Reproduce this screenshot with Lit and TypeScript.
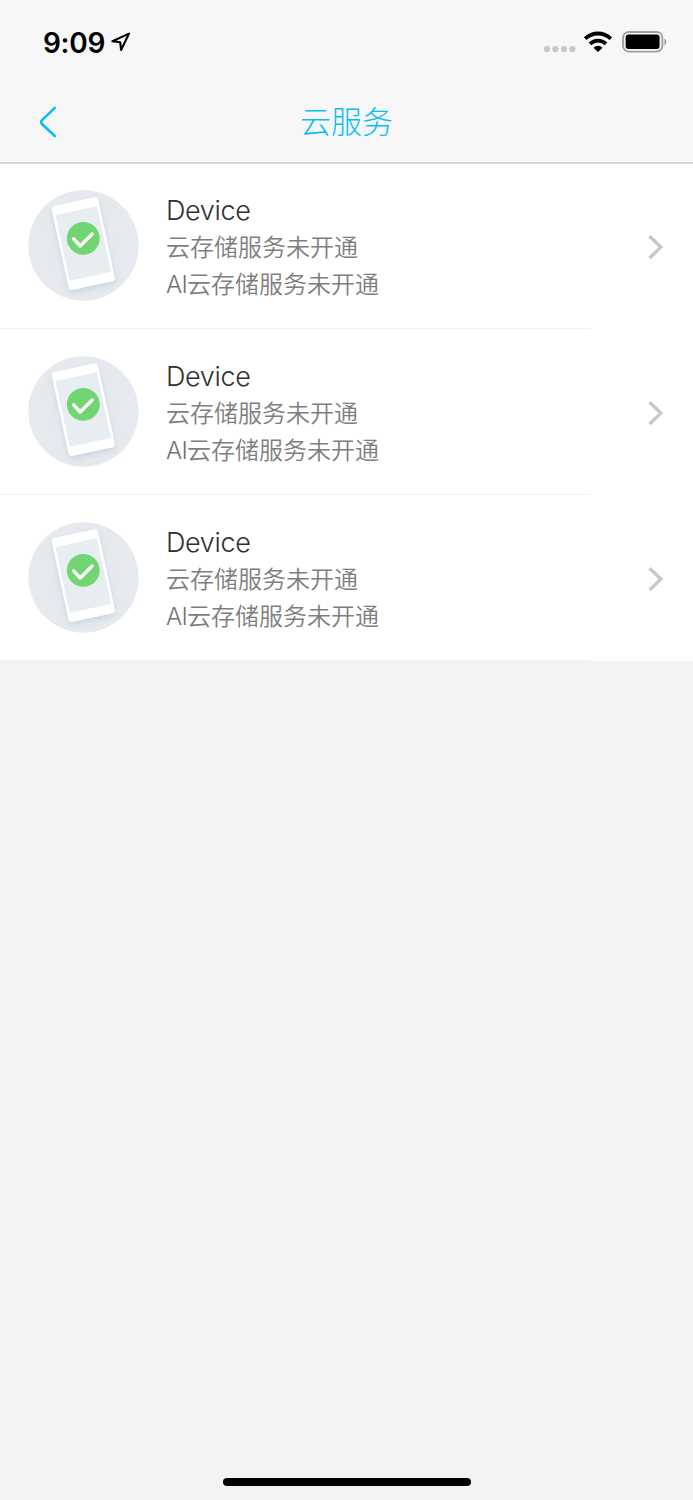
import { LitElement, html, css } from "lit";
import { customElement, property } from "lit/decorators.js";

@customElement("status-bar")
class StatusBar extends LitElement {
  static styles = css`
    :host {
      display: flex;
      justify-content: space-between;
      align-items: center;
      height: 84px;
      padding: 0 26.5px 0 43px;
      box-sizing: border-box;
    }
    .left {
      display: flex;
      align-items: center;
      gap: 6px;
    }
    .time {
      font: 600 28px/34px Inter, sans-serif;
      letter-spacing: -0.3px;
      color: #000;
      padding-top: 1px;
    }
    .right {
      display: flex;
      align-items: center;
    }
    svg {
      display: block;
    }
    .wifi {
      margin: 0 9.5px 0 8px;
    }
  `;
  render() {
    return html`
      <div class="left">
        <span class="time">9:09</span>
        <svg width="20" height="20" viewBox="0 0 20 20" fill="none" stroke="#000" stroke-width="2.1" stroke-linejoin="round">
          <path d="M18 1.6 1.4 9.2l7.8 1.1.9 7.7z" />
        </svg>
      </div>
      <div class="right">
        <svg width="32" height="22" viewBox="0 0 32 22" fill="#c7c7c8">
          <rect x="0" y="15" width="6" height="6" rx="2.2" />
          <rect x="8.4" y="15" width="6" height="6" rx="2.2" />
          <rect x="17" y="15" width="6" height="6" rx="2.2" />
          <rect x="25.4" y="15" width="6" height="6" rx="2.2" />
        </svg>
        <svg class="wifi" width="28" height="22" viewBox="0 0 28 22" fill="none" stroke="#000" stroke-width="3.9">
          <path d="M1.2 7.7a18.4 18.4 0 0 1 25.6 0" />
          <path d="M6 12.9a11.5 11.5 0 0 1 16 0" />
          <path d="M14 21 9.5 16.7a6.4 6.4 0 0 1 9 0z" fill="#000" stroke="none" />
        </svg>
        <svg width="45" height="22" viewBox="0 0 45 22">
          <rect x="1" y="1" width="39.4" height="19.6" rx="5.8" fill="none" stroke="#a0a0a1" stroke-width="1.9" />
          <rect x="3.6" y="3.6" width="34" height="14.4" rx="3" fill="#000" />
          <path d="M42.4 7.4c2.5 1 2.5 5.8 0 6.8z" fill="#a0a0a1" />
        </svg>
      </div>
    `;
  }
}

@customElement("nav-bar")
class NavBar extends LitElement {
  @property() heading = "";
  static styles = css`
    :host {
      display: grid;
      grid-template-columns: 93px 1fr 93px;
      align-items: center;
      height: 76px;
    }
    .back {
      display: block;
      margin-left: 38px;
    }
    .title {
      text-align: center;
      font: 300 31px/44px "Noto Sans CJK SC", sans-serif;
      color: #08bef5;
      padding-bottom: 4px;
    }
  `;
  render() {
    return html`
      <svg class="back" width="20" height="34" viewBox="0 0 20 34" fill="none" stroke="#08bef5" stroke-width="2.6" stroke-linecap="round" stroke-linejoin="round">
        <path d="M16.8 2.9 4.2 14.9q-2.2 2.2 0 4.4L16.8 31" />
      </svg>
      <div class="title">${this.heading}</div>
    `;
  }
}

@customElement("device-row")
class DeviceRow extends LitElement {
  @property() name = "";
  @property({ attribute: false }) lines: string[] = [];
  static styles = css`
    :host {
      display: flex;
      height: 166px;
      padding: 0 28px 0 28px;
      box-sizing: border-box;
      align-items: center;
      background:
        linear-gradient(#f1f2f4, #f1f2f4) left bottom / 591px 1.5px no-repeat,
        #fff;
    }
    svg {
      display: block;
      flex: none;
    }
    .picture {
      margin-bottom: 0.4px;
    }
    .text {
      flex: 1;
      padding: 3px 0 0 27px;
    }
    .name {
      font: 300 27px/38px Inter, sans-serif;
      letter-spacing: -0.35px;
      color: #2f2f2f;
      margin-bottom: -1px;
    }
    .line {
      font: 350 24px/37px Inter, "Noto Sans CJK SC", sans-serif;
      color: #7e7e7e;
      white-space: nowrap;
    }
    .latin {
      font-weight: 300;
      letter-spacing: -0.7px;
      color: #727272;
    }
    .arrow {
      margin-top: 1px;
    }
  `;
  render() {
    return html`
      <svg class="picture" width="111" height="111" viewBox="0 0 111 111">
        <defs>
          <filter id="shade" x="-30%" y="-30%" width="160%" height="160%">
            <feDropShadow dx="0" dy="3" stdDeviation="3" flood-color="#9db4c8" flood-opacity="0.4" />
          </filter>
        </defs>
        <circle cx="55.5" cy="55.5" r="55.2" fill="#e6eaef" />
        <g filter="url(#shade)">
          <rect x="31.6" y="10.6" width="47.4" height="86" rx="4" fill="#fff" transform="rotate(-12.2 55.3 53.6)" />
        </g>
        <rect x="34.1" y="19.8" width="42.4" height="67.4" rx="1.5" fill="#e8edf2" transform="rotate(-12.2 55.3 53.5)" />
        <circle cx="55.3" cy="48.3" r="16.4" fill="#70d572" />
        <path d="M45.6 48.8 52.2 56 64.2 44" fill="none" stroke="#fff" stroke-width="3.4" stroke-linecap="round" stroke-linejoin="round" />
      </svg>
      <div class="text">
        <div class="name">${this.name}</div>
        ${this.lines.map((l) => {
          const latin = l.match(/^[A-Z]*/)![0];
          return html`<div class="line"><span class="latin">${latin}</span>${l.slice(latin.length)}</div>`;
        })}
      </div>
      <svg class="arrow" width="17" height="26" viewBox="0 0 17 26" fill="none" stroke="#c7c7cc" stroke-width="3.4">
        <path d="M1.6 2.2 12.8 13.1 1.6 24" />
      </svg>
    `;
  }
}

@customElement("app-root")
class AppRoot extends LitElement {
  static styles = css`
    :host {
      display: flex;
      flex-direction: column;
      width: 693px;
      height: 1500px;
      background: #f1f3f5;
    }
    header {
      position: relative;
      z-index: 1;
      height: 164px;
      margin-bottom: -1px;
      box-sizing: border-box;
      background: #f7f7f7;
      border-bottom: 2px solid #d6d6d7;
    }
    main {
      flex: 1;
    }
    .home {
      width: 248px;
      height: 8px;
      border-radius: 4px;
      background: #000;
      margin: 0 auto 14px;
    }
  `;
  private devices = ["Device", "Device", "Device"];
  private lines = ["云存储服务未开通", "AI云存储服务未开通"];
  render() {
    return html`
      <header>
        <status-bar></status-bar>
        <nav-bar heading="云服务"></nav-bar>
      </header>
      <main>
        ${this.devices.map((d) => html`<device-row .name=${d} .lines=${this.lines}></device-row>`)}
      </main>
      <div class="home"></div>
    `;
  }
}
